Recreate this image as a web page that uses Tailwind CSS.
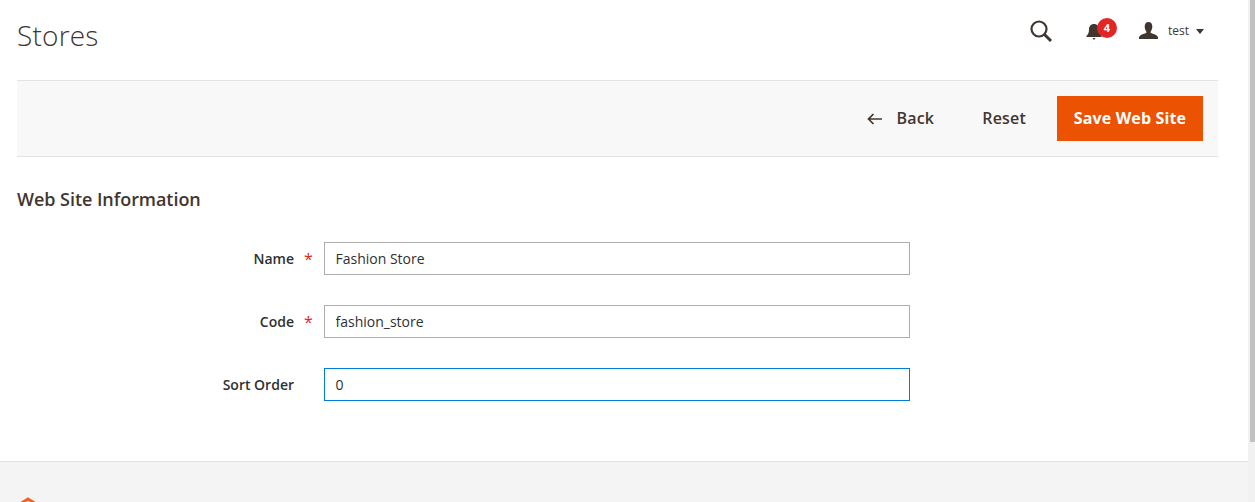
<!DOCTYPE html>
<html lang="en">
<head>
  <meta charset="UTF-8" />
  <title>Stores</title>
  <script src="https://cdn.jsdelivr.net/npm/@tailwindcss/browser@4"></script>
</head>
<body class="bg-white h-[502px] overflow-hidden font-['Open_Sans',sans-serif] text-[#41362f] flex">
  <div class="flex-1 min-w-0 flex flex-col">
    <div class="flex-1 pl-[17px] pr-[30px]">
      <!-- page header -->
      <header class="h-[80px] flex items-start justify-between">
        <h1 class="text-[28px] leading-[38px] font-light mt-[16px] tracking-[0.2px]">Stores</h1>
        <div class="flex items-center mt-[19px] pr-[14px]">
          <svg class="w-[24px] h-[24px]" viewBox="0 0 24 24" fill="none" stroke="#41362f">
            <circle cx="10" cy="10" r="7.5" stroke-width="2.2" />
            <path d="M15.5 15.5 22 22" stroke-width="3" />
          </svg>
          <div class="relative w-[16px] h-[18px] ml-[33px] mt-[1px]">
            <svg class="w-[16px] h-[18px]" viewBox="0 0 16 18" fill="#41362f">
              <path d="M8 1c3 0 5 2.200 5 5.500 0 3.500 1 5 2.500 6.500v1H.5v-1C2 11.500 3 10 3 6.500 3 3.200 5 1 8 1zM6.500 15h3L8 17z" />
            </svg>
            <span class="absolute left-[11px] top-[-5px] w-[20px] h-[20px] rounded-full bg-[#e22626] text-white text-[11px] leading-[20px] font-bold text-center">4</span>
          </div>
          <svg class="w-[19px] h-[19px] ml-[37px]" viewBox="0 0 20 20" fill="#41362f">
            <path d="M10 0c2.700 0 4 2 4 4.800 0 2.200-.7 4-1.700 5.200v1.600c2.500.9 7 2 7.700 4.400v2H0V16c.7-2.400 5.200-3.500 7.700-4.400V10C6.700 8.800 6 7 6 4.800 6 2 7.300 0 10 0z" />
          </svg>
          <span class="text-xs ml-[10px]">test</span>
          <span class="ml-[7px] w-0 h-0 border-x-[4px] border-x-transparent border-t-[5px] border-t-[#41362f]"></span>
        </div>
      </header>

      <!-- actions -->
      <div class="h-[77px] bg-[#f8f8f8] border-y border-[#e3e3e3] flex items-center justify-end pr-[15px]">
        <button class="flex items-center text-base font-semibold pb-[2px] tracking-[0.2px]">
          <svg class="w-[15px] h-[12px] mr-[14px] mt-[2px]" viewBox="0 0 15 12" fill="none" stroke="#41362f" stroke-width="1.700">
            <path d="M15 6H1.500M6.500 1 1.500 6l5 5" />
          </svg>
          Back
        </button>
        <button class="text-base font-semibold ml-[48px] pb-[2px] tracking-[0.2px]">Reset</button>
        <button class="h-[45px] w-[146px] ml-[31px] bg-[#eb5202] text-white text-base font-bold pb-[2px] tracking-[0.15px]">Save Web Site</button>
      </div>

      <h2 class="text-lg leading-[24px] font-semibold mt-[30px] tracking-[-0.05px]">Web Site Information</h2>

      <!-- form -->
      <form class="mt-[31px] flex flex-col gap-[30px] text-[#303030]">
        <div class="flex items-center h-[33px]">
          <label class="w-[277px] text-right text-sm font-semibold">Name</label>
          <span class="w-[30px] pl-[10px] text-[#e22626] text-base">*</span>
          <input class="w-[586px] h-[33px] border border-[#adadad] px-[10.5px] text-sm" value="Fashion Store" />
        </div>
        <div class="flex items-center h-[33px]">
          <label class="w-[277px] text-right text-sm font-semibold">Code</label>
          <span class="w-[30px] pl-[10px] text-[#e22626] text-base">*</span>
          <input class="w-[586px] h-[33px] border border-[#adadad] px-[10.5px] text-sm" value="fashion_store" />
        </div>
        <div class="flex items-center h-[33px]">
          <label class="w-[277px] text-right text-sm font-semibold">Sort Order</label>
          <span class="w-[30px]"></span>
          <input class="w-[586px] h-[33px] border border-[#007bdb] px-[10.5px] text-sm" value="0" />
        </div>
      </form>
    </div>

    <!-- footer -->
    <footer class="h-[41px] bg-[#f4f4f4] border-t border-[#e3e3e3] pl-[18px] pt-[35px] overflow-hidden">
      <svg class="w-[20px] h-[24px]" viewBox="0 0 20 24" fill="none" stroke="#f26322" stroke-width="3">
        <path d="M2 7 10 2l8 5v10" />
      </svg>
    </footer>
  </div>
  <!-- scrollbar -->
  <div class="w-[7px] bg-[#f1f1f1] pl-[2px]">
    <div class="h-[442px] bg-[#c1c1c1]"></div>
  </div>
</body>
</html>
